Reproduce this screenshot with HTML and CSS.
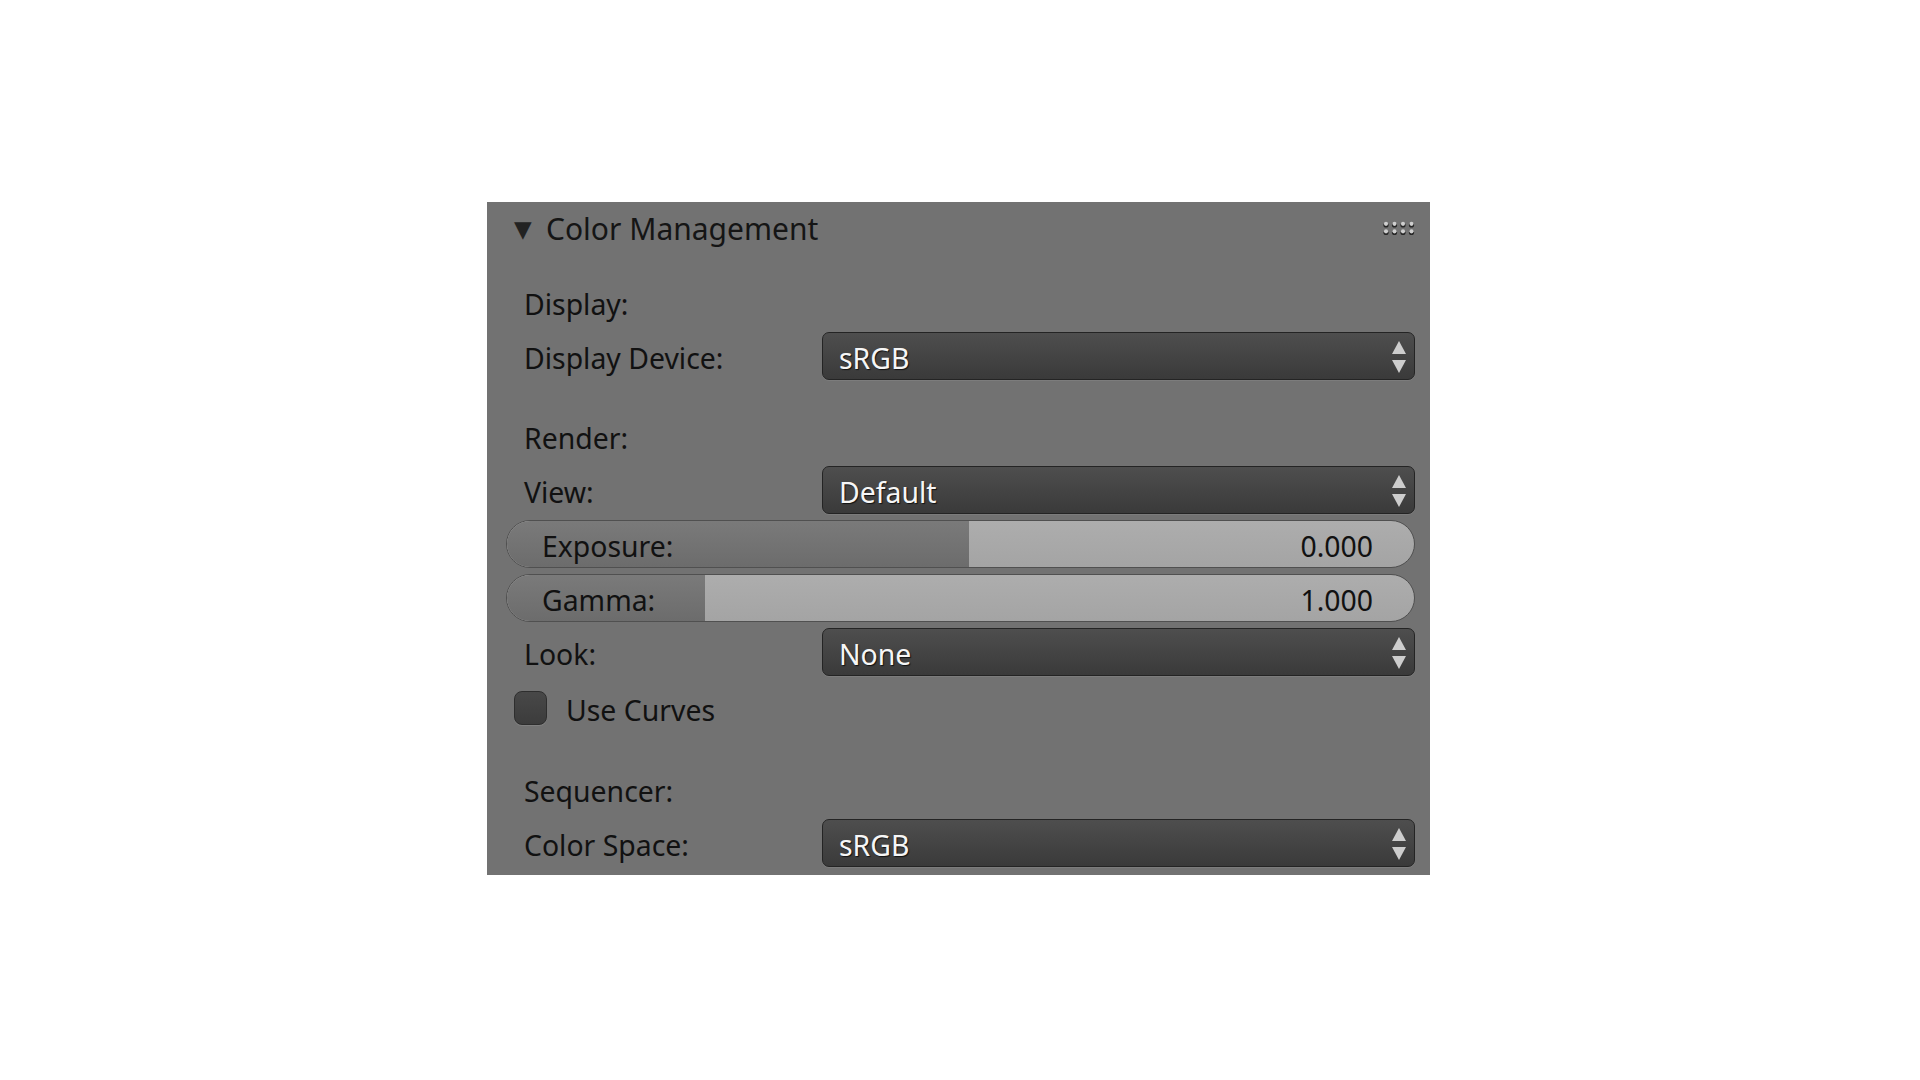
FILE: index.html
```html
<!DOCTYPE html>
<html lang="en">
<head>
    <meta charset="UTF-8">
    <meta name="viewport" content="width=device-width, initial-scale=1.0">
    <title>Color Management</title>
    <link rel="stylesheet" href="styles.css">
</head>
<body>
    <div class="panel">
        <div class="header">
            <span class="arrow">&#9660;</span>
            <span class="title">Color Management</span>
            <svg class="grip" width="32" height="18" viewBox="0 0 32 18">
                <g fill="#262626">
                    <circle cx="3" cy="6" r="2.6"/><circle cx="11.5" cy="6" r="2.6"/><circle cx="20" cy="6" r="2.6"/><circle cx="28.5" cy="6" r="2.6"/>
                    <circle cx="3" cy="13.5" r="2.6"/><circle cx="11.5" cy="13.5" r="2.6"/><circle cx="20" cy="13.5" r="2.6"/><circle cx="28.5" cy="13.5" r="2.6"/>
                </g>
                <g fill="#cfcfcf">
                    <circle cx="3" cy="4.8" r="2.1"/><circle cx="11.5" cy="4.8" r="2.1"/><circle cx="20" cy="4.8" r="2.1"/><circle cx="28.5" cy="4.8" r="2.1"/>
                    <circle cx="3" cy="12.3" r="2.1"/><circle cx="11.5" cy="12.3" r="2.1"/><circle cx="20" cy="12.3" r="2.1"/><circle cx="28.5" cy="12.3" r="2.1"/>
                </g>
            </svg>
        </div>

        <div class="rows">
            <div class="row heading">Display:</div>
            <div class="row field">
                <span class="label">Display Device:</span>
                <div class="select">sRGB<span class="updown"></span></div>
            </div>

            <div class="row heading section">Render:</div>
            <div class="row field">
                <span class="label">View:</span>
                <div class="select">Default<span class="updown"></span></div>
            </div>
            <div class="row slider">
                <span class="track" style="width: 50.9%"></span>
                <span class="slider-label">Exposure:</span>
                <span class="slider-value">0.000</span>
            </div>
            <div class="row slider">
                <span class="track" style="width: 21.8%"></span>
                <span class="slider-label">Gamma:</span>
                <span class="slider-value">1.000</span>
            </div>
            <div class="row field">
                <span class="label">Look:</span>
                <div class="select">None<span class="updown"></span></div>
            </div>
            <div class="row check">
                <span class="box"></span>
                <span>Use Curves</span>
            </div>

            <div class="row heading section seq">Sequencer:</div>
            <div class="row field">
                <span class="label">Color Space:</span>
                <div class="select">sRGB<span class="updown"></span></div>
            </div>
        </div>
    </div>
</body>
</html>
```

FILE: styles.css
```css
:root {
    --panel: #727272;
    --text: #111111;
}

body {
    margin: 0;
    padding: 0;
    background: #ffffff;
    font-family: "Noto Sans", "DejaVu Sans", sans-serif;
    font-size: 28.4px;
    color: var(--text);
}

.panel {
    margin: 202px 0 0 487px;
    width: 943px;
    height: 673px;
    box-sizing: border-box;
    padding: 0 15px 0 19px;
    background: var(--panel);
}

.header {
    height: 52px;
    display: flex;
    align-items: center;
}

.arrow {
    margin-left: 8px;
    width: 32px;
    font-size: 23px;
    color: #222222;
}

.title {
    flex: 1;
    font-size: 30px;
    color: #151515;
}

.rows {
    display: flex;
    flex-direction: column;
    gap: 6px;
    margin-top: 26px;
}

.row {
    height: 48px;
    box-sizing: border-box;
    padding-top: 4px;
    display: flex;
    align-items: center;
}

.heading {
    padding-top: 0;
    padding-left: 18px;
    margin-bottom: -2px;
}

.section {
    margin-top: 28px;
}

.seq {
    margin-top: 29px;
}

.field {
    display: grid;
    grid-template-columns: 316px 1fr;
    align-items: center;
    padding-top: 0;
}

.label {
    padding-top: 4px;
    padding-left: 18px;
}

.select {
    position: relative;
    height: 48px;
    box-sizing: border-box;
    display: flex;
    align-items: center;
    padding: 4px 0 0 16px;
    border: 1px solid #242424;
    border-radius: 7px;
    background: linear-gradient(#4e4e4e, #3a3a3a);
    box-shadow: 0 1px 0 #7c7c7c;
    color: #f6f6f6;
    text-shadow: 1px 1px 1px #111111;
}

/* up/down arrows on the right of a dropdown */
.updown {
    position: absolute;
    right: 8px;
    top: 8px;
    width: 14px;
    height: 32px;
}

.updown::before,
.updown::after {
    content: "";
    position: absolute;
    left: 0;
    border-left: 7px solid transparent;
    border-right: 7px solid transparent;
}

.updown::before {
    top: 0;
    border-bottom: 13px solid #cdcdcd;
}

.updown::after {
    bottom: 0;
    border-top: 13px solid #cdcdcd;
}

.slider {
    position: relative;
    justify-content: space-between;
    padding: 4px 41px 0 35px;
    border: 1px solid #505050;
    border-radius: 24px;
    background: linear-gradient(#adadad, #a4a4a4);
    overflow: hidden;
}

.track {
    position: absolute;
    left: 0;
    top: 0;
    bottom: 0;
    background: linear-gradient(#7a7a7a, #6c6c6c);
}

.slider-label,
.slider-value {
    position: relative;
}

.check {
    margin-top: 2px;
    padding-left: 8px;
    padding-top: 0;
}

.check span:last-child {
    padding-top: 4px;
}

.box {
    width: 33px;
    height: 34px;
    box-sizing: border-box;
    margin-right: 19px;
    border: 1px solid #2e2e2e;
    border-radius: 8px;
    background: linear-gradient(#484848, #3c3c3c);
    box-shadow: 0 1px 0 #808080;
}
```
